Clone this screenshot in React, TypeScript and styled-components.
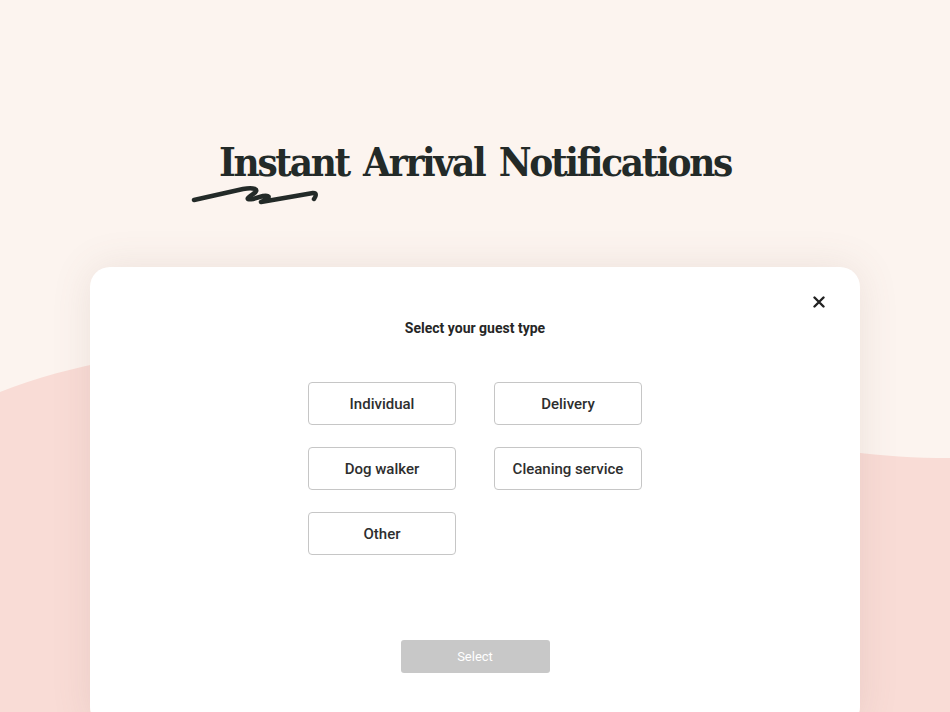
import React from 'react';
import styled, { createGlobalStyle } from 'styled-components';

const GlobalStyle = createGlobalStyle`
  html, body {
    margin: 0;
    padding: 0;
    background: #fcf4ef;
  }
  * {
    box-sizing: border-box;
  }
`;

const Page = styled.div`
  position: relative;
  width: 950px;
  height: 712px;
  overflow: hidden;
  background: #fcf4ef;
  font-family: Roboto, 'Noto Sans', sans-serif;
`;

const Backdrop = styled.svg`
  position: absolute;
  left: 0;
  top: 0;
  width: 950px;
  height: 712px;
`;

const Content = styled.div`
  position: relative;
  display: flex;
  flex-direction: column;
  align-items: center;
  padding-top: 136px;
`;

const Heading = styled.div`
  position: relative;
  height: 131px;
`;

const Title = styled.h1`
  margin: 0;
  font-family: 'DejaVu Serif', 'Liberation Serif', serif;
  font-stretch: condensed;
  font-weight: 700;
  font-size: 40px;
  letter-spacing: -2.3px;
  word-spacing: 4px;
  color: #232a28;
  line-height: 52px;
`;

const Squiggle = styled.svg`
  position: absolute;
  left: -28px;
  top: 47px;
`;

const Card = styled.div`
  width: 770px;
  height: 460px;
  align-self: flex-start;
  margin-left: 90px;
  background: #fff;
  border-radius: 20px;
  box-shadow: 0 0 40px rgba(120, 90, 80, 0.12);
  position: relative;
  display: flex;
  flex-direction: column;
  align-items: center;
  padding-top: 53px;
`;

const Close = styled.button`
  position: absolute;
  right: 31px;
  top: 25px;
  width: 20px;
  height: 20px;
  padding: 0;
  border: none;
  background: none;
  display: flex;
  align-items: center;
  justify-content: center;
`;

const Prompt = styled.div`
  font-size: 14px;
  font-weight: 700;
  color: #262626;
`;

const Options = styled.div`
  display: grid;
  grid-template-columns: 148px 148px;
  column-gap: 38px;
  row-gap: 22px;
  margin-top: 46px;
`;

const Option = styled.button`
  height: 43px;
  border: 1.5px solid #c6c6c6;
  border-radius: 4px;
  background: #fff;
  font-family: Roboto, 'Noto Sans', sans-serif;
  font-size: 15px;
  font-weight: 500;
  color: #2e2e2e;
  cursor: pointer;
`;

const Submit = styled.button`
  margin-top: 85px;
  width: 149px;
  height: 33px;
  border: none;
  border-radius: 3px;
  background: #c8c8c8;
  color: #fff;
  font-family: Roboto, 'Noto Sans', sans-serif;
  font-size: 13px;
  font-weight: 400;
`;

const options = ['Individual', 'Delivery', 'Dog walker', 'Cleaning service', 'Other'];

export default function App() {
  return (
    <Page>
      <GlobalStyle />
      <Backdrop viewBox="0 0 950 712">
        <path d="M0 392 C 120 345, 300 330, 480 360 C 640 390, 760 458, 950 458 L 950 712 L 0 712 Z" fill="#f9dcd6" />
      </Backdrop>
      <Content>
        <Heading>
          <Title>Instant Arrival Notifications</Title>
          <Squiggle width="130" height="26" viewBox="0 0 130 26">
            <path
              d="M3 17 L 52 6 C 62 4, 70 6, 62 11 C 56 15, 54 17, 62 16 L 72 13 C 78 12, 80 14, 74 17 L 70 19 L 122 10 C 126 10, 125 13, 123 16"
              fill="none"
              stroke="#232a28"
              strokeWidth="4.5"
              strokeLinecap="round"
              strokeLinejoin="round"
            />
          </Squiggle>
        </Heading>
        <Card>
          <Close aria-label="Close">
            <svg width="12" height="12" viewBox="0 0 12 12">
              <path d="M1.5 1.5 L10.5 10.5 M10.5 1.5 L1.5 10.5" stroke="#222" strokeWidth="2.4" strokeLinecap="round" />
            </svg>
          </Close>
          <Prompt>Select your guest type</Prompt>
          <Options>
            {options.map((o) => (
              <Option key={o}>{o}</Option>
            ))}
          </Options>
          <Submit>Select</Submit>
        </Card>
      </Content>
    </Page>
  );
}
